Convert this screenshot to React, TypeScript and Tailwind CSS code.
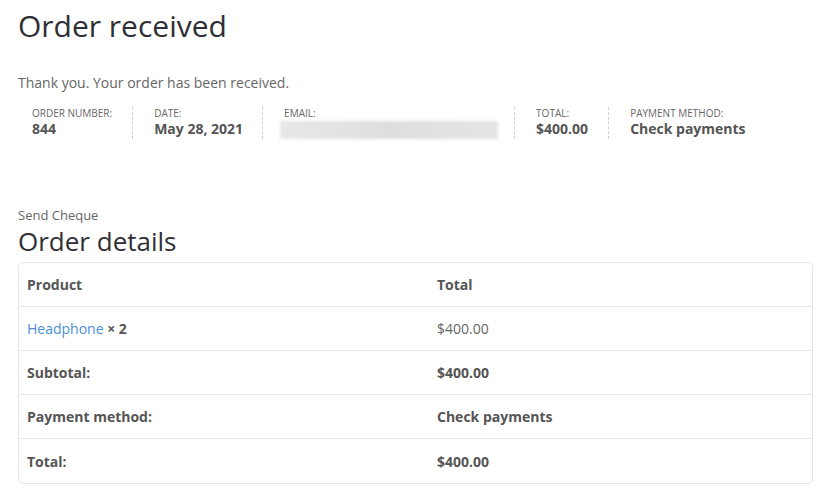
import React from "react";

const font = { fontFamily: '"Open Sans", sans-serif' };

function Item({ label, value, first, last, pr = "pr-[20px]", children }: { label: string; value?: string; first?: boolean; last?: boolean; pr?: string; children?: React.ReactNode }) {
  return (
    <li
      className={`flex flex-col ${first ? "pl-[14px]" : "pl-[21px]"} ${pr} ${last ? "" : "border-r border-dashed border-[#cfcfcf]"} h-[32px]`}
    >
      <span className="text-[10px] leading-[12px] uppercase text-[#666]">{label}</span>
      {children ?? <strong className="text-[14px] leading-[20px] font-bold text-[#555]">{value}</strong>}
    </li>
  );
}

function Row({ left, right, rightBold = true, last }: { left: React.ReactNode; right: string; rightBold?: boolean; last?: boolean }) {
  return (
    <div className={`grid grid-cols-[410px_1fr] h-[44px] items-center ${last ? "" : "border-b border-[#e6e6e6]"}`}>
      <div className="pl-[8px] text-[14px] font-bold text-[#555]">{left}</div>
      <div className={`pl-[8px] text-[14px] ${rightBold ? "font-bold text-[#555]" : "text-[#666]"}`}>{right}</div>
    </div>
  );
}

export default function App() {
  return (
    <div className="w-[825px] h-[497px] bg-white overflow-hidden" style={font}>
      <div className="pl-[18px] pr-[12px]">
        <h1 className="text-[30px] leading-[40px] pt-[6px] text-[#2f2f35] font-normal">Order received</h1>
        <p className="text-[14px] leading-[20px] mt-[27px] text-[#666]">Thank you. Your order has been received.</p>
        <ul className="flex mt-[14px]">
          <Item label="Order number:" value="844" first />
          <Item label="Date:" value="May 28, 2021" pr="pr-[19px]" />
          <Item label="Email:" pr="pr-[16px]">
            <div className="w-[218px] h-[18px] mt-[2px] -ml-[4px] bg-gradient-to-r from-[#e8e8e8] via-[#dedede] to-[#e4e4e4] blur-[1.5px]" />
          </Item>
          <Item label="Total:" value="$400.00" />
          <Item label="Payment method:" value="Check payments" last />
        </ul>
        <p className="text-[13px] leading-[16px] mt-[68px] text-[#666]">Send Cheque</p>
        <h2 className="text-[26px] leading-[36px] text-[#2f2f35] font-normal">Order details</h2>
        <div className="mt-[3px] border border-[#e6e6e6] rounded-[5px]">
          <Row left="Product" right="Total" />
          <div className="grid grid-cols-[410px_1fr] h-[44px] items-center border-b border-[#e6e6e6]">
            <div className="pl-[8px] text-[14px]">
              <a className="text-[#4a8fd8]">Headphone</a> <strong className="font-bold text-[#555]">× 2</strong>
            </div>
            <div className="pl-[8px] text-[14px] text-[#666]">$400.00</div>
          </div>
          <Row left="Subtotal:" right="$400.00" />
          <Row left="Payment method:" right="Check payments" />
          <Row left="Total:" right="$400.00" last />
        </div>
      </div>
    </div>
  );
}
